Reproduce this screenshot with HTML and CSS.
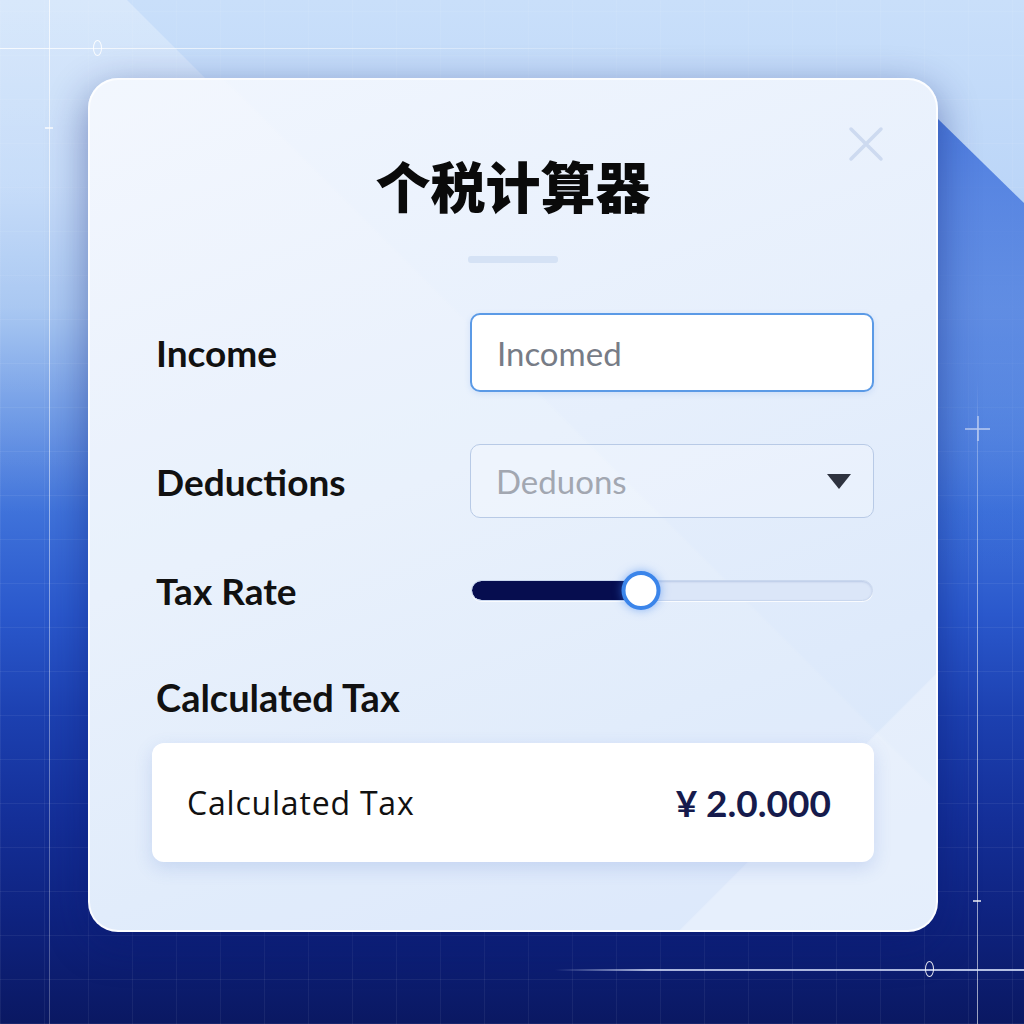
FILE: index.html
```html
<!DOCTYPE html>
<html lang="zh">
<head>
<meta charset="utf-8">
<title>个税计算器</title>
<link rel="stylesheet" href="styles.css">
</head>
<body>
  <div class="stage">
    <!-- background decoration lines -->
    <span class="line line-top"></span>
    <span class="line line-left"></span>
    <span class="line line-right"></span>
    <span class="line line-bottom"></span>
    <span class="diamond diamond-top"></span>
    <span class="diamond diamond-bottom"></span>
    <span class="tick tick-left"></span>
    <span class="tick tick-right"></span>
    <span class="cross"></span>

    <div class="card">
      <button class="close" aria-label="关闭">
        <svg width="36" height="36" viewBox="0 0 36 36"><path d="M3 3 L33 33 M33 3 L3 33" stroke="#cddaf0" stroke-width="3.5" stroke-linecap="round" fill="none"/></svg>
      </button>

      <h1 class="title">个税计算器</h1>
      <div class="divider"></div>

      <div class="form">
        <label class="label" for="income">Income</label>
        <input class="field field-active" id="income" type="text" placeholder="Incomed">

        <label class="label">Deductions</label>
        <div class="field field-select">
          <span class="select-text">Deduons</span>
          <span class="caret"></span>
        </div>

        <label class="label">Tax Rate</label>
        <div class="slider">
          <div class="slider-track">
            <div class="slider-fill" style="width:41%"></div>
          </div>
          <div class="slider-thumb" style="left:42.3%"></div>
        </div>
      </div>

      <h2 class="result-title">Calculated Tax</h2>
      <div class="result">
        <span class="result-label">Calculated Tax</span>
        <strong class="result-value">¥ 2.0.000</strong>
      </div>
    </div>
  </div>
</body>
</html>
```

FILE: styles.css
```css
*{
  margin: 0;
  padding: 0;
  box-sizing: border-box;
}
body{
  font-family: Lato, "Noto Sans", sans-serif;
  background: #0b1b68;
}
.stage{
  position: relative;
  width: 1024px;
  height: 1024px;
  overflow: hidden;
  padding: 78px 0 0 88px;
  background:
    repeating-linear-gradient(90deg, rgba(255,255,255,0.06) 0 1px, transparent 1px 44px),
    repeating-linear-gradient(0deg, rgba(255,255,255,0.06) 0 1px, transparent 1px 44px),
    linear-gradient(180deg, #c9dffa 0%, #bcd6f8 18%, #a2c3f1 30%, #6f9be6 40%, #3f72da 50%, #2a58cc 60%, #1c40b0 70%, #142f98 80%, #0e227e 90%, #0a1862 100%);
}
/* light band top-left */
.stage::before{
  content: "";
  position: absolute;
  left: 0; top: 0;
  width: 700px; height: 520px;
  clip-path: polygon(0 0, 127px 0, 647px 520px, 0 520px);
  background: linear-gradient(180deg, rgba(255,255,255,0.28), rgba(255,255,255,0.08) 60%, transparent);
}
/* darker band right of the card */
.stage::after{
  content: "";
  position: absolute;
  left: 936px; top: 117px;
  width: 88px; height: 907px;
  clip-path: polygon(0 0, 88px 86px, 88px 100%, 0 100%);
  background: linear-gradient(180deg, rgba(40,95,215,0.75) 0%, rgba(40,95,215,0.5) 25%, rgba(40,95,215,0) 50%);
}

.line{
  position: absolute;
  background: rgba(255,255,255,0.6);
}
.line-top{
  left: 0; top: 48px;
  width: 700px; height: 1px;
  background: linear-gradient(90deg, rgba(255,255,255,0.8), rgba(255,255,255,0.5) 50%, transparent);
}
.line-left{
  left: 49px; top: 0;
  width: 1px; height: 1024px;
  background: linear-gradient(180deg, rgba(255,255,255,0.7), rgba(255,255,255,0.25));
}
.line-right{
  left: 977px; top: 380px;
  width: 1px; height: 644px;
  background: linear-gradient(180deg, transparent, rgba(255,255,255,0.45) 10%, rgba(255,255,255,0.6));
}
.line-bottom{
  left: 555px; top: 969px;
  width: 469px; height: 2px;
  background: linear-gradient(90deg, transparent, rgba(220,230,255,0.8) 20%, rgba(220,230,255,0.8));
}
.diamond{
  position: absolute;
  width: 9px; height: 16px;
  border: 1.5px solid rgba(255,255,255,0.9);
  border-radius: 50%;
}
.diamond-top{ left: 93px; top: 40px; }
.diamond-bottom{ left: 925px; top: 961px; }
.tick{
  position: absolute;
  width: 8px; height: 2px;
  background: rgba(255,255,255,0.7);
}
.tick-left{ left: 45px; top: 127px; }
.tick-right{ left: 973px; top: 900px; }
.cross{
  position: absolute;
  left: 965px; top: 416px;
  width: 25px; height: 25px;
  background:
    linear-gradient(rgba(255,255,255,0.75), rgba(255,255,255,0.75)) center / 25px 2px no-repeat,
    linear-gradient(rgba(255,255,255,0.75), rgba(255,255,255,0.75)) center / 2px 25px no-repeat;
}

.card{
  position: relative;
  z-index: 1;
  width: 850px;
  height: 854px;
  padding: 0 62px;
  border: 2px solid rgba(255,255,255,0.85);
  border-radius: 30px;
  background:
    linear-gradient(135deg, transparent 84.8%, rgba(255,255,255,0.28) 85%),
    linear-gradient(45deg, rgba(255,255,255,0.1) 58%, transparent 58.2%),
    linear-gradient(160deg, #f1f6fe 0%, #e6effc 45%, #d6e5fa 100%);
  box-shadow: 0 12px 40px rgba(8,25,110,0.45);
}
.close{
  position: absolute;
  top: 46px; right: 52px;
  width: 36px; height: 36px;
  border: none;
  background: none;
}
.title{
  padding-top: 72px;
  font-family: "Noto Sans CJK SC", sans-serif;
  font-size: 55px;
  line-height: 64px;
  font-weight: 900;
  text-align: center;
  color: #0a0a0a;
}
.divider{
  width: 90px; height: 7px;
  margin: 40px auto 0;
  border-radius: 3px;
  background: #d5e2f5;
}

.form{
  display: grid;
  grid-template-columns: 318px 404px;
  grid-template-rows: 79px 74px 40px;
  row-gap: 52px;
  align-items: center;
  margin-top: 50px;
}
.label{
  padding-left: 4px;
  font-size: 37px;
  font-weight: 700;
  color: #111;
}
.field{
  height: 100%;
  width: 100%;
  border-radius: 10px;
  font-family: Lato, sans-serif;
  font-size: 33px;
  padding-left: 25px;
}
.field-active{
  border: 2px solid #5b9ae6;
  background: #fff;
  outline: none;
  box-shadow: 0 2px 6px rgba(70,130,220,0.15);
}
.field-active::placeholder{
  color: #777c86;
}
.field-select{
  display: flex;
  align-items: center;
  justify-content: space-between;
  padding-right: 22px;
  border: 1.5px solid #b8cae6;
  background: rgba(255,255,255,0.25);
}
.select-text{
  color: #a2a7b1;
}
.caret{
  width: 0; height: 0;
  border-left: 12px solid transparent;
  border-right: 12px solid transparent;
  border-top: 15px solid #2e333f;
}

.slider{
  position: relative;
  height: 40px;
  display: flex;
  align-items: center;
}
.slider-track{
  width: 402px;
  height: 21px;
  margin-left: 1px;
  border-radius: 11px;
  background: #dbe6f8;
  border: 1px solid #c9d7ee;
  box-shadow: inset 0 1px 2px rgba(90,120,180,0.25), 0 1px 0 rgba(255,255,255,0.8);
  overflow: hidden;
}
.slider-fill{
  height: 100%;
  border-radius: 11px;
  background: #060d4f;
}
.slider-thumb{
  position: absolute;
  top: 1px;
  width: 39px; height: 39px;
  transform: translateX(-50%);
  border-radius: 50%;
  border: 4px solid #3b85ea;
  background: #fff;
  box-shadow: 0 0 10px rgba(60,130,240,0.55);
}

.result-title{
  margin-top: 64px;
  padding-left: 4px;
  font-size: 38px;
  line-height: 46px;
  font-weight: 700;
  color: #111;
}
.result{
  display: flex;
  align-items: center;
  justify-content: space-between;
  height: 119px;
  margin-top: 23px;
  padding: 0 43px 0 35px;
  border-radius: 12px;
  background: #fff;
  box-shadow: 0 6px 18px rgba(70,110,200,0.18);
}
.result-label{
  font-family: "Open Sans", sans-serif;
  font-size: 32px;
  letter-spacing: 0.8px;
  color: #111;
}
.result-value{
  font-size: 37px;
  font-weight: 700;
  color: #161b4c;
}
```
